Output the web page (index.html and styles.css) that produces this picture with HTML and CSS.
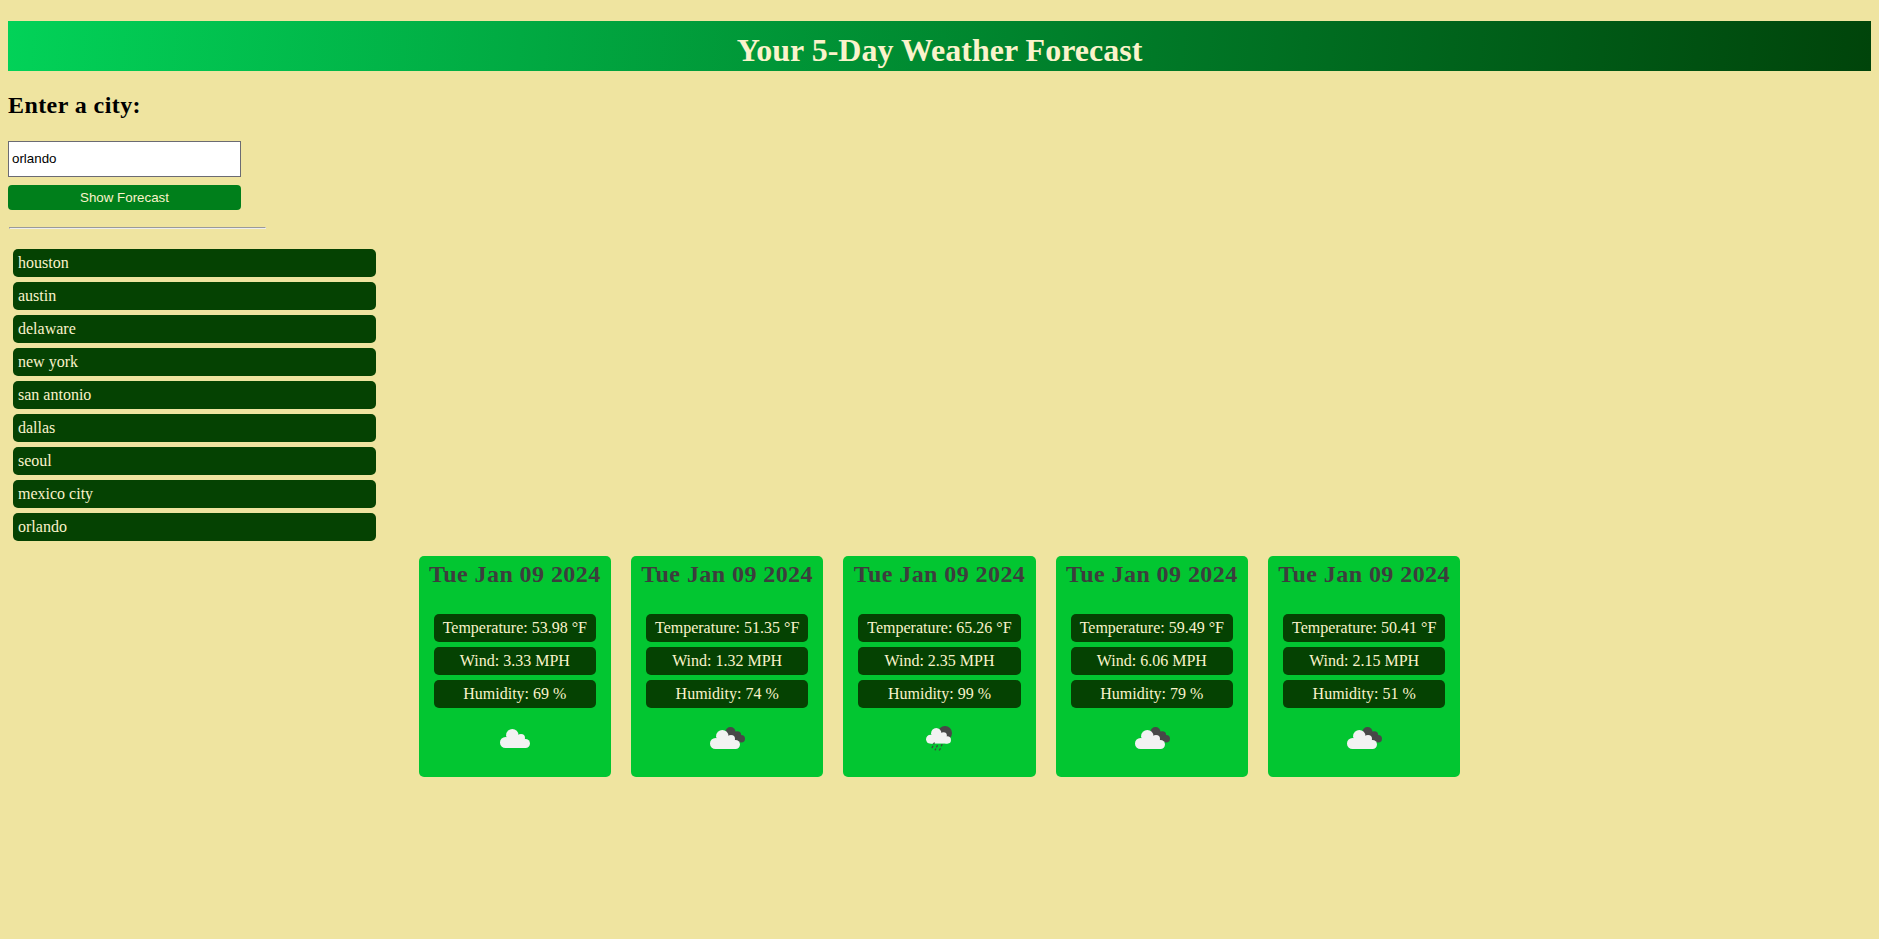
FILE: index.html
```html
<!DOCTYPE html>
<html lang="en">
<head>
<meta charset="utf-8">
<title>Weather Forecast</title>
<link rel="stylesheet" href="styles.css">
</head>
<body>
<svg class="defs" width="0" height="0">
  <symbol id="cloud" viewBox="0 0 30 19"><circle cx="5.5" cy="13.5" r="5.5"/><circle cx="12.3" cy="6.2" r="6.2"/><circle cx="21" cy="9" r="4"/><circle cx="25.5" cy="14.5" r="4.5"/><path d="M5.5 19V10L7 8L17 5L23 10L26 11V19Z"/></symbol>
  <symbol id="cloud-back" viewBox="0 0 50 50"><circle cx="28.5" cy="17" r="5"/><circle cx="35.2" cy="20.2" r="4"/><circle cx="39.2" cy="23.8" r="3.8"/><path d="M26 17L32 15L37 27L30 26Z"/></symbol>
</svg>
<header><h1 class="title">Your 5-Day Weather Forecast</h1></header>
<main>
  <section class="search">
    <h2 class="label">Enter a city:</h2>
    <input class="city" type="text" value="orlando">
    <button class="show">Show Forecast</button>
    <hr class="rule">
    <ul class="history">
      <li>houston</li><li>austin</li><li>delaware</li><li>new york</li><li>san antonio</li><li>dallas</li><li>seoul</li><li>mexico city</li><li>orlando</li>
    </ul>
  </section>
  <section class="forecast">
    <article class="card">
      <h2>Tue Jan 09 2024</h2>
      <p>Temperature: 53.98 °F</p><p>Wind: 3.33 MPH</p><p>Humidity: 69 %</p>
      <svg class="icon" viewBox="0 0 50 50"><use href="#cloud" x="10" y="14" width="30" height="19" fill="#f2f2f2"/></svg>
    </article>
    <article class="card">
      <h2>Tue Jan 09 2024</h2>
      <p>Temperature: 51.35 °F</p><p>Wind: 1.32 MPH</p><p>Humidity: 74 %</p>
      <svg class="icon" viewBox="0 0 50 50"><use class="dark" href="#cloud-back" width="50" height="50"/><use href="#cloud" x="8" y="15" width="30" height="19" fill="#f2f2f2"/></svg>
    </article>
    <article class="card">
      <h2>Tue Jan 09 2024</h2>
      <p>Temperature: 65.26 °F</p><p>Wind: 2.35 MPH</p><p>Humidity: 99 %</p>
      <svg class="icon" viewBox="0 0 50 50"><circle class="dark" cx="31" cy="18" r="7"/><use href="#cloud" x="12" y="13" width="25" height="15.8" fill="#f2f2f2"/><path class="rain" d="M20.2 28l-.4 .8M18.8 31.3l-.7 1.3M23.3 30.6l-.7 1.3M28 29.6l-.6 1.2M21.7 34l-.5 .8M26.2 33.7l-.7 1.3"/></svg>
    </article>
    <article class="card">
      <h2>Tue Jan 09 2024</h2>
      <p>Temperature: 59.49 °F</p><p>Wind: 6.06 MPH</p><p>Humidity: 79 %</p>
      <svg class="icon" viewBox="0 0 50 50"><use class="dark" href="#cloud-back" width="50" height="50"/><use href="#cloud" x="8" y="15" width="30" height="19" fill="#f2f2f2"/></svg>
    </article>
    <article class="card">
      <h2>Tue Jan 09 2024</h2>
      <p>Temperature: 50.41 °F</p><p>Wind: 2.15 MPH</p><p>Humidity: 51 %</p>
      <svg class="icon" viewBox="0 0 50 50"><use class="dark" href="#cloud-back" width="50" height="50"/><use href="#cloud" x="8" y="15" width="30" height="19" fill="#f2f2f2"/></svg>
    </article>
  </section>
</main>
</body>
</html>
```
FILE: styles.css
```css
* { box-sizing: border-box; }
body {
  margin: 0;
  padding: 21px 8px 0;
  background: #efe4a0;
  font: 16px/18px "Liberation Serif", "Times New Roman", serif;
  color: #000;
}
.defs { display: none; }
.title {
  margin: 0;
  height: 50px;
  padding-top: 11px;
  font-size: 32px;
  line-height: 37px;
  text-align: center;
  color: #faf3cb;
  background: linear-gradient(95deg, #02d258 0%, #00822c 55%, #00440a 100%);
}
.search { display: flex; flex-direction: column; align-items: flex-start; }
.label { margin: 20px 0 22px; font-size: 24px; line-height: 28px; letter-spacing: 0.42px; }
.city {
  width: 233px;
  height: 36px;
  padding: 0 3px 2px;
  border: 1px solid #6b6b73;
  background: #fff;
  color: #000;
  font: 13.333px "Liberation Sans", Arial, sans-serif;
}
.show {
  width: 233px;
  height: 25px;
  margin-top: 8px;
  padding: 0;
  border: 0;
  border-radius: 4px;
  background: #007f1b;
  color: #faf3cb;
  font: 13.333px "Liberation Sans", Arial, sans-serif;
}
.rule { width: 257px; margin: 17px 0 20px 1px; border: 1px inset #eee; height: 2px; }
.history { list-style: none; margin: 0 0 15px 5px; padding: 0; width: 363px; display: grid; gap: 5px; }
.history li, .card p {
  height: 28px;
  padding: 5px;
  border-radius: 5px;
  background: #054202;
  color: #faf3cb;
}
.forecast { display: flex; justify-content: center; gap: 20px; }
.card {
  width: 192.33px;
  height: 221px;
  border-radius: 5px;
  background: #02c631;
  text-align: center;
  white-space: nowrap;
}
.card h2 { margin: 4px 0 26px; color: #3d3d3d; font-size: 24px; line-height: 28px; letter-spacing: 0.43px; }
.card p { margin: 0 15px 5px; }
.icon { display: block; width: 50px; height: 50px; margin: 7px auto 0; }
.dark { fill: #484848; }
.rain { fill: none; stroke: #3d4a3d; stroke-width: 1.3; stroke-linecap: round; }
```
